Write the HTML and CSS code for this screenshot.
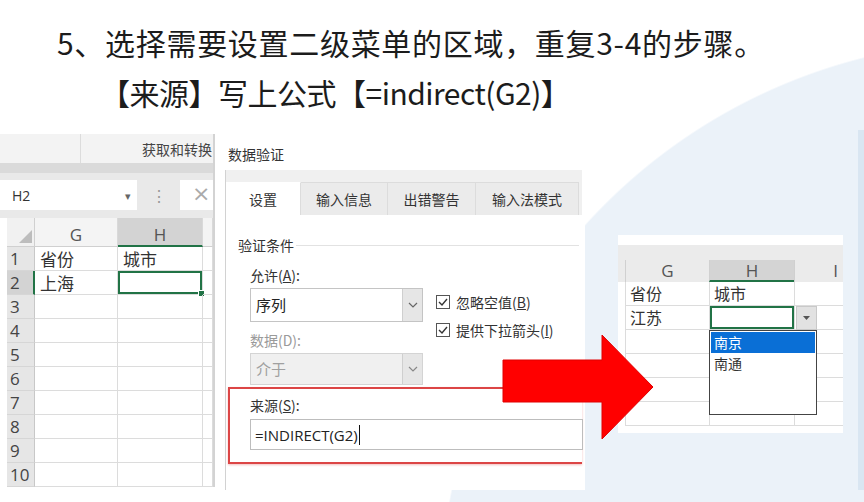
FILE: index.html
```html
<!DOCTYPE html>
<html lang="zh-CN">
  <head>
    <meta charset="UTF-8" />
    <meta name="viewport" content="width=device-width, initial-scale=1.0" />
    <title>二级菜单 - 数据验证</title>
    <link rel="stylesheet" href="styles.css">
  </head>
  <body>
    <div class="slide">
      <header class="heading">
        <p class="line1">5、选择需要设置二级菜单的区域，重复3-4的步骤。</p>
        <p class="line2">【来源】写上公式【=indirect(G2)】</p>
      </header>

      <div class="shots">
        <!-- excel window, left -->
        <div class="xl">
          <div class="ribbon">
            <span class="rb-split"></span>
            <span class="rb-label">获取和转换</span>
          </div>
          <div class="ribbon-edge"></div>
          <div class="fbar">
            <div class="namebox"><span>H2</span><span class="nb-arrow">▾</span></div>
            <span class="fb-dots">⋮</span>
            <div class="fb-x">×</div>
          </div>
          <div class="sheet">
            <div class="corner"></div><div class="colh">G</div><div class="colh on">H</div><div class="colh"></div>
            <div class="rowh">1</div><div class="cell">省份</div><div class="cell">城市</div><div class="cell"></div>
            <div class="rowh on">2</div><div class="cell">上海</div><div class="cell sel"></div><div class="cell"></div>
            <div class="rowh">3</div><div class="cell"></div><div class="cell"></div><div class="cell"></div>
            <div class="rowh">4</div><div class="cell"></div><div class="cell"></div><div class="cell"></div>
            <div class="rowh">5</div><div class="cell"></div><div class="cell"></div><div class="cell"></div>
            <div class="rowh">6</div><div class="cell"></div><div class="cell"></div><div class="cell"></div>
            <div class="rowh">7</div><div class="cell"></div><div class="cell"></div><div class="cell"></div>
            <div class="rowh">8</div><div class="cell"></div><div class="cell"></div><div class="cell"></div>
            <div class="rowh">9</div><div class="cell"></div><div class="cell"></div><div class="cell"></div>
            <div class="rowh">10</div><div class="cell"></div><div class="cell"></div><div class="cell"></div>
          </div>
        </div>

        <!-- data validation dialog -->
        <div class="dlg">
          <div class="dlg-title">数据验证</div>
          <div class="dlg-panel">
            <div class="tabs">
              <div class="tab on">设置</div>
              <div class="tab">输入信息</div>
              <div class="tab">出错警告</div>
              <div class="tab">输入法模式</div>
            </div>
            <div class="tab-body">
              <div class="legend"><span>验证条件</span></div>
              <div class="criteria">
                <div class="col-left">
                  <div class="lbl">允许(<u>A</u>):</div>
                  <div class="select">
                    <span>序列</span>
                    <span class="sel-btn"><svg width="10" height="6" viewBox="0 0 10 6"><polyline points="1,1 5,5 9,1" fill="none" stroke="#666" stroke-width="1.2"/></svg></span>
                  </div>
                  <div class="lbl dim">数据(D):</div>
                  <div class="select off">
                    <span>介于</span>
                    <span class="sel-btn"><svg width="10" height="6" viewBox="0 0 10 6"><polyline points="1,1 5,5 9,1" fill="none" stroke="#888" stroke-width="1.2"/></svg></span>
                  </div>
                </div>
                <div class="col-right">
                  <div class="chk">
                    <span class="box"><svg width="12" height="12" viewBox="0 0 12 12"><polyline points="2,6 5,9 10,3" fill="none" stroke="#333" stroke-width="1.4"/></svg></span>
                    忽略空值(<u>B</u>)
                  </div>
                  <div class="chk">
                    <span class="box"><svg width="12" height="12" viewBox="0 0 12 12"><polyline points="2,6 5,9 10,3" fill="none" stroke="#333" stroke-width="1.4"/></svg></span>
                    提供下拉箭头(<u>I</u>)
                  </div>
                </div>
              </div>
              <div class="source">
                <div class="lbl">来源(<u>S</u>):</div>
                <div class="input">=INDIRECT(G2)<span class="caret"></span></div>
              </div>
            </div>
          </div>
        </div>

        <!-- result, right -->
        <div class="side">
          <div class="snip">
            <div class="snip-head">
              <div class="sh-pad"></div><div class="sh">G</div><div class="sh on">H</div><div class="sh last">I</div>
            </div>
            <div class="snip-row"><div class="sr-pad"></div><div class="sc">省份</div><div class="sc">城市</div><div class="sc last"></div></div>
            <div class="snip-row"><div class="sr-pad"></div><div class="sc">江苏</div><div class="sc sel"></div><div class="sc last"></div></div>
            <div class="snip-row"><div class="sr-pad"></div><div class="sc"></div><div class="sc"></div><div class="sc last"></div></div>
            <div class="snip-row"><div class="sr-pad"></div><div class="sc"></div><div class="sc"></div><div class="sc last"></div></div>
            <div class="snip-row"><div class="sr-pad"></div><div class="sc"></div><div class="sc"></div><div class="sc last"></div></div>
            <div class="snip-row"><div class="sr-pad"></div><div class="sc"></div><div class="sc"></div><div class="sc last"></div></div>
            <div class="drop-btn"><svg width="7" height="4" viewBox="0 0 7 4"><polygon points="0,0 7,0 3.5,4" fill="#555"/></svg></div>
            <div class="drop-list">
              <div class="opt on">南京</div>
              <div class="opt">南通</div>
            </div>
          </div>
        </div>
      </div>

      <svg class="arrow" width="156" height="108" viewBox="0 0 156 108">
        <path d="M3 27 H102 V2 L153 54 L102 106 V69 H3 Z" fill="#ff0000" stroke="#e00000" stroke-width="1"/>
      </svg>
    </div>
  </body>
</html>
```

FILE: styles.css
```css
* {
  box-sizing: border-box;
}

body {
  margin: 0;
  background-color: #fff;
  font-family: "Noto Sans CJK SC", "Noto Sans", sans-serif;
  color: #222;
}

.slide {
  position: relative;
  width: 864px;
  height: 502px;
  overflow: hidden;
  background: radial-gradient(circle 560px at 1000px 600px, #ebf2f9 99.7%, #fff 100%);
}

/* heading */
.heading {
  padding: 17px 0 13px;
  height: 130px;
}

.heading p {
  margin: 0;
  font-size: 30px;
  line-height: 50px;
  color: #1c1c1c;
  white-space: nowrap;
}

.line1 {
  padding-left: 57px;
  letter-spacing: 0.7px;
}

.line2 {
  padding-left: 100px;
  letter-spacing: -0.5px;
}

.shots {
  display: flex;
  align-items: flex-start;
  height: 360px;
}

/* left excel */
.xl {
  width: 215px;
  margin-top: 4px;
  background: #fff;
  border-right: 2px solid #d3d3d3;
}

.ribbon {
  display: flex;
  align-items: center;
  height: 29px;
  background: #f3f3f3;
}

.rb-split {
  width: 1px;
  height: 29px;
  margin-left: 80px;
  background: #dcdcdc;
}

.rb-label {
  margin-left: auto;
  padding-right: 1px;
  font-size: 14px;
  color: #444;
}

.ribbon-edge {
  height: 10px;
  background: #dadada;
}

.fbar {
  display: flex;
  align-items: flex-start;
  height: 45px;
  padding-top: 7px;
  background: #e9e9e9;
}

.namebox {
  display: flex;
  align-items: center;
  width: 137px;
  height: 30px;
  padding: 0 6px 0 12px;
  background: #fff;
  font-family: "Open Sans", sans-serif;
  font-size: 14px;
  color: #333;
}

.nb-arrow {
  margin-left: auto;
  font-size: 11px;
  color: #666;
}

.fb-dots {
  width: 43px;
  line-height: 30px;
  text-align: center;
  color: #999;
  font-size: 16px;
}

.fb-x {
  flex: 1;
  height: 30px;
  padding-left: 12px;
  background: #fff;
  font-family: "DejaVu Sans", sans-serif;
  font-size: 22px;
  line-height: 28px;
  color: #aaa;
}

.sheet {
  display: grid;
  grid-template-columns: 28px 83px 85px 10px;
  grid-template-rows: 29px repeat(10, 24px);
  margin-left: 7px;
}

.corner {
  position: relative;
  background: #f1f1f1;
  border-right: 1px solid #d0d0d0;
  border-bottom: 1px solid #d0d0d0;
}

.corner::after {
  content: "";
  position: absolute;
  right: 2px;
  bottom: 3px;
  border-left: 13px solid transparent;
  border-bottom: 13px solid #bdbdbd;
}

.colh {
  padding-top: 6px;
  text-align: center;
  background: #f4f4f4;
  border-right: 1px solid #d9d9d9;
  border-bottom: 1px solid #d0d0d0;
  font-family: "Open Sans", sans-serif;
  font-size: 17px;
  line-height: 22px;
  color: #555;
}

.colh.on {
  background: #d3d3d3;
  border-bottom: 2px solid #217346;
}

.rowh {
  background: #e6e6e6;
  border-right: 1px solid #c8c8c8;
  border-bottom: 1px solid #d6d6d6;
  font-family: "Open Sans", sans-serif;
  font-size: 17px;
  line-height: 23px;
  padding-left: 3px;
  color: #444;
}

.rowh.on {
  background: #d3d3d3;
  border-right: 2px solid #217346;
}

.cell {
  position: relative;
  padding-left: 5px;
  border-right: 1px solid #dcdcdc;
  border-bottom: 1px solid #dcdcdc;
  font-size: 17px;
  line-height: 23px;
  color: #333;
}

.cell.sel {
  box-shadow: inset 0 0 0 2px #217346;
}

.cell.sel::after {
  content: "";
  position: absolute;
  right: -3px;
  bottom: -3px;
  width: 5px;
  height: 5px;
  background: #217346;
  border: 1px solid #fff;
}

/* dialog */
.dlg {
  width: 367px;
  height: 360px;
  margin-left: 3px;
  background: #fff;
}

.dlg-title {
  padding: 14px 0 0 10px;
  font-size: 14px;
  line-height: 20px;
  color: #333;
}

.dlg-panel {
  height: 320px;
  width: 357px;
  margin: 6px 0 0 7px;
  border-left: 1px solid #d2d2d2;
}

.tabs {
  display: flex;
  padding-top: 12px;
  background: #f0f0f0;
}

.tab {
  height: 33px;
  line-height: 32px;
  text-align: center;
  background: #ebebeb;
  border: 1px solid #dcdcdc;
  border-bottom: none;
  border-left: none;
  font-size: 14px;
  color: #333;
}

.tab:nth-child(1) { width: 75px; }
.tab:nth-child(2) { width: 87px; }
.tab:nth-child(3) { width: 88px; }
.tab:nth-child(4) { width: 103px; }

.tab.on {
  background: #fff;
  border-top-color: #fff;
}

.tab-body {
  padding-top: 20px;
}

.legend {
  display: flex;
  align-items: center;
  padding: 0 3px 0 12px;
  font-size: 14px;
  line-height: 20px;
  color: #333;
}

.legend::after {
  content: "";
  flex: 1;
  height: 1px;
  margin-left: 2px;
  background: #e2e2e2;
}

.criteria {
  display: flex;
  margin-top: 10px;
  padding-left: 24px;
}

.col-left {
  width: 173px;
}

.lbl {
  font-size: 14px;
  line-height: 20px;
  color: #333;
}

.lbl.dim {
  margin-top: 8px;
  color: #9a9a9a;
}

.select {
  display: flex;
  align-items: stretch;
  height: 34px;
  margin-top: 3px;
  border: 1px solid #c4c4c4;
  background: #fff;
  font-size: 15px;
  color: #222;
}

.select span:first-child {
  flex: 1;
  padding-left: 5px;
  line-height: 31px;
}

.sel-btn {
  display: flex;
  align-items: center;
  justify-content: center;
  width: 20px;
  background: #e6e6e6;
  border-left: 1px solid #cfcfcf;
}

.select.off {
  height: 32px;
  background: #f0f0f0;
  border-color: #d4d4d4;
  color: #a0a0a0;
}

.select.off span:first-child {
  line-height: 29px;
}

.col-right {
  margin-left: 13px;
  padding-top: 30px;
}

.chk {
  display: flex;
  align-items: center;
  height: 14px;
  margin-bottom: 14px;
  font-size: 14px;
  color: #333;
  white-space: nowrap;
}

.box {
  display: flex;
  align-items: center;
  justify-content: center;
  width: 14px;
  height: 14px;
  margin-right: 6px;
  border: 1px solid #555;
  background: #fff;
}

.source {
  width: 354px;
  height: 77px;
  margin: 2px 0 0 2px;
  padding: 6px 0 0 20px;
  border: 2px solid #dc4545;
  border-right: none;
  box-shadow: 0 1px 2px rgba(220, 69, 69, 0.35);
}

.input {
  display: flex;
  align-items: center;
  width: 333px;
  height: 31px;
  margin-top: 4px;
  padding-left: 4px;
  border: 1px solid #bdbdbd;
  background: #fff;
  font-family: "Open Sans", sans-serif;
  font-size: 15px;
  color: #222;
}

.caret {
  width: 1px;
  height: 20px;
  margin-left: 1px;
  background: #111;
}

/* right side */
.side {
  flex: 1;
  height: 360px;
  padding: 105px 0 0 33px;
  border-right: 6px solid #d9e6f2;
}

.snip {
  position: relative;
  width: 225px;
  padding: 10px 0 7px;
  background: #fff;
}

.snip-head {
  display: flex;
  align-items: flex-end;
  height: 37px;
  background: #ebebeb;
}

.sh-pad {
  width: 7px;
}

.sh {
  width: 84px;
  height: 22px;
  text-align: center;
  border-left: 1px solid #d0d0d0;
  font-family: "Open Sans", sans-serif;
  font-size: 17px;
  line-height: 22px;
  color: #555;
}

.sh.on {
  width: 85px;
  background: #d4d4d4;
  border-bottom: 2px solid #217346;
}

.sh.last {
  width: 49px;
  text-align: right;
  padding-right: 5px;
}

.snip-row {
  display: flex;
  height: 24px;
}

.sr-pad {
  width: 7px;
}

.sc {
  width: 84px;
  padding-left: 4px;
  border-left: 1px solid #dcdcdc;
  border-bottom: 1px solid #dcdcdc;
  font-size: 16px;
  line-height: 22px;
  color: #333;
}

.sc:nth-child(3) {
  width: 85px;
}

.sc.last {
  width: 49px;
}

.sc.sel {
  box-shadow: inset 0 0 0 2px #217346;
}

.drop-btn {
  position: absolute;
  left: 178px;
  top: 71px;
  display: flex;
  align-items: center;
  justify-content: center;
  width: 21px;
  height: 24px;
  background: #e2e2e2;
  border: 1px solid #c9c9c9;
}

.drop-list {
  position: absolute;
  left: 91px;
  top: 95px;
  width: 108px;
  height: 85px;
  padding: 1px;
  background: #fff;
  border: 1px solid #444;
}

.opt {
  height: 21px;
  padding-left: 3px;
  font-size: 14px;
  line-height: 21px;
  color: #333;
}

.opt.on {
  background: #0a6fd6;
  color: #fff;
}

.arrow {
  position: absolute;
  left: 500px;
  top: 333px;
}
```
